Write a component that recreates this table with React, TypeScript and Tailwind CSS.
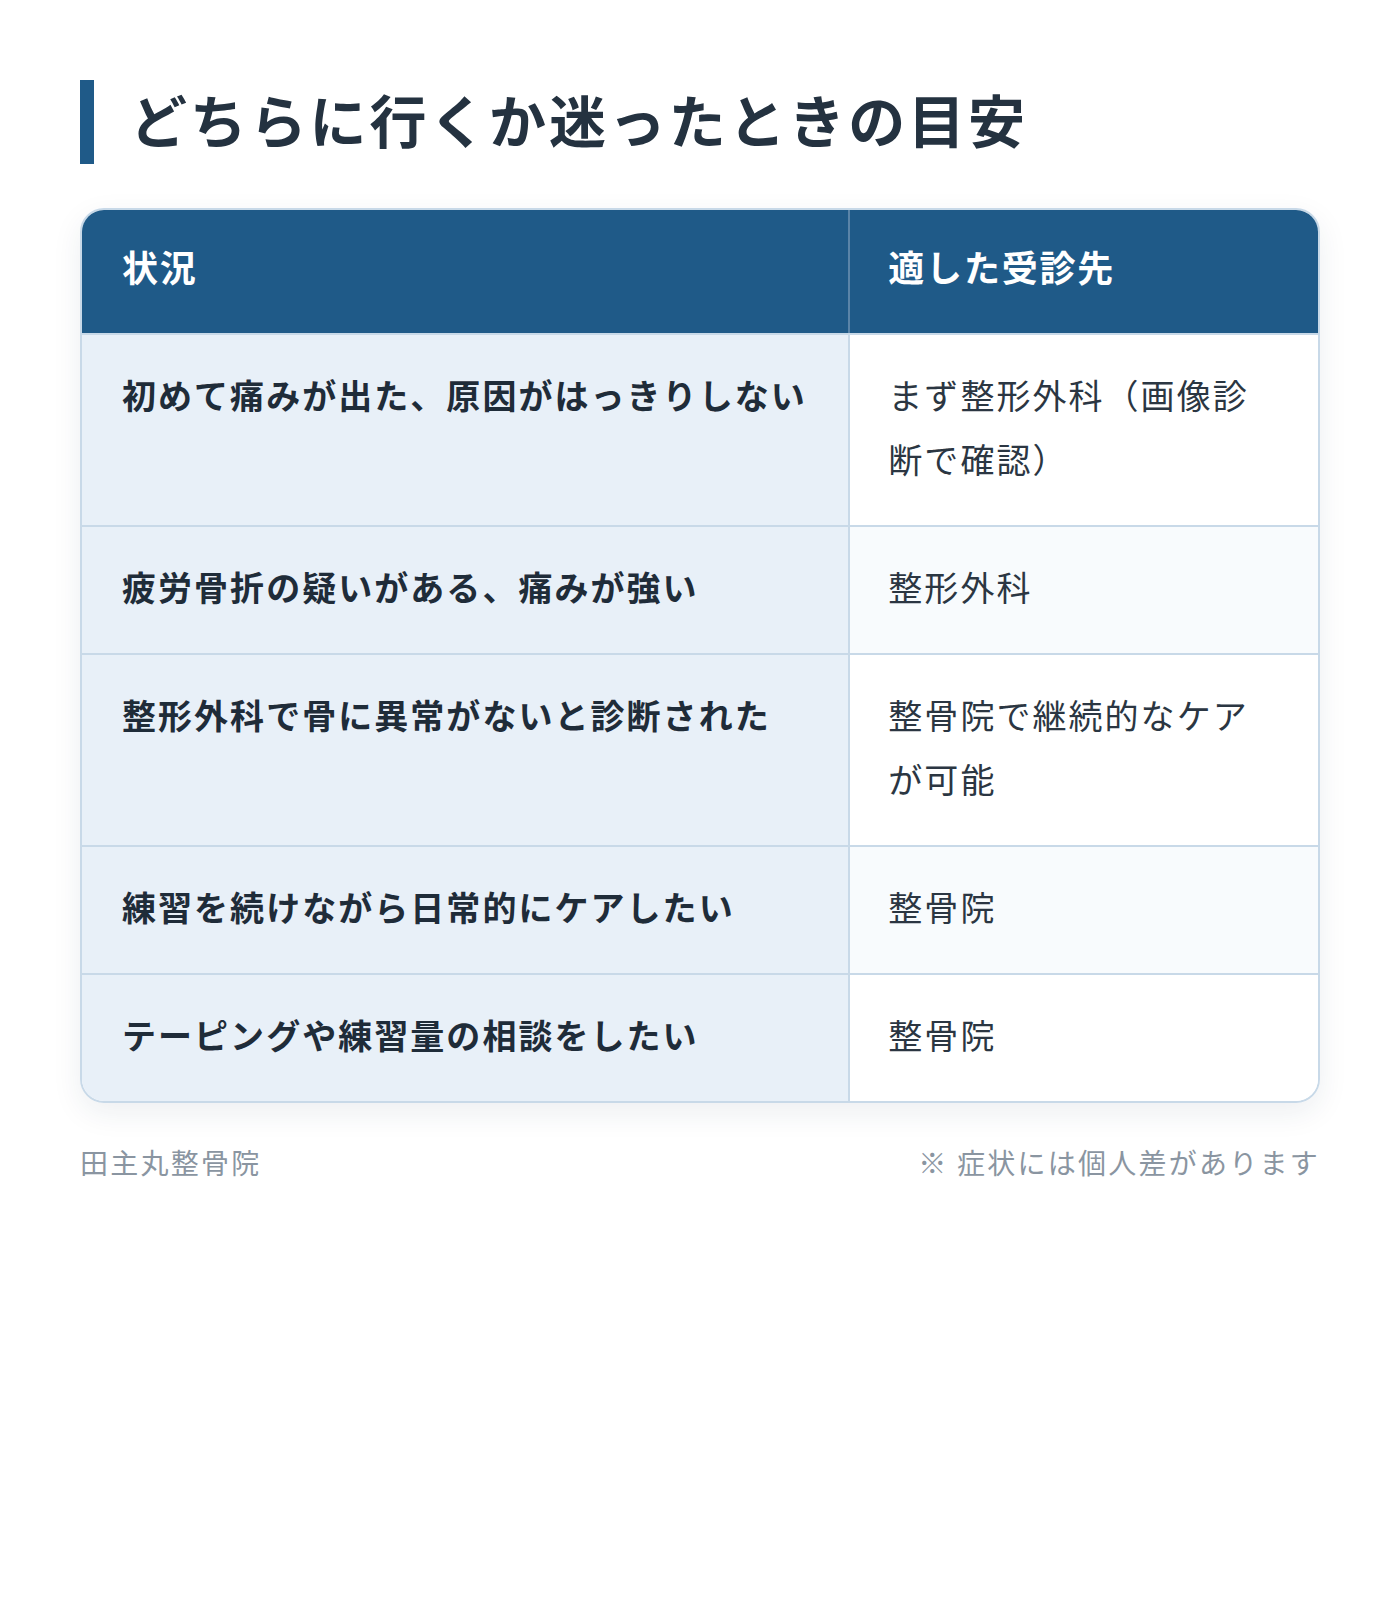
import React from "react";

interface Row {
    situation: string;
    place: string;
}

const rows: Row[] = [
    { situation: "初めて痛みが出た、原因がはっきりしない", place: "まず整形外科（画像診断で確認）" },
    { situation: "疲労骨折の疑いがある、痛みが強い", place: "整形外科" },
    { situation: "整形外科で骨に異常がないと診断された", place: "整骨院で継続的なケアが可能" },
    { situation: "練習を続けながら日常的にケアしたい", place: "整骨院" },
    { situation: "テーピングや練習量の相談をしたい", place: "整骨院" },
];

const font = { fontFamily: '"Noto Sans CJK JP", "Noto Sans", sans-serif' };

export default function App() {
    return (
        <div className="w-[1400px] min-h-[1600px] bg-white px-20 pt-20" style={font}>
            {/* Title */}
            <h1 className="border-l-[14px] border-[#1f5a88] pl-9 pb-2 text-[57px] leading-[76px] font-bold tracking-[0.05em] text-[#243240]">
                どちらに行くか迷ったときの目安
            </h1>

            {/* Table */}
            <div className="mt-11 overflow-hidden rounded-3xl border-2 border-[#c8d9e8] shadow-[0_10px_30px_rgba(20,50,80,0.08)]">
                <div className="grid grid-cols-[62%_38%] bg-[#1f5a88] text-white">
                    <div className="px-10 pt-[35px] pb-[45px] text-[36px] leading-[43px] font-bold tracking-[0.05em]">状況</div>
                    <div className="border-l-2 border-[#5a84a8] pl-[38px] pr-10 pt-[35px] pb-[45px] text-[36px] leading-[43px] font-bold tracking-[0.05em]">
                        適した受診先
                    </div>
                </div>
                {rows.map((row, i) => (
                    <div key={i} className="grid grid-cols-[62%_38%] border-t-2 border-[#c8d9e8]">
                        <div className="bg-[#e8f0f8] px-10 pt-[28px] pb-[34px] text-[34px] leading-[64px] font-bold tracking-[0.06em] text-[#1f2c39]">
                            {row.situation}
                        </div>
                        <div
                            className={`border-l-2 border-[#c8d9e8] pl-[38px] pr-12 pt-[28px] pb-[34px] text-[34px] leading-[64px] tracking-[0.06em] text-[#2b3642] ${
                                i % 2 === 1 ? "bg-[#f8fbfd]" : "bg-white"
                            }`}
                        >
                            {row.place}
                        </div>
                    </div>
                ))}
            </div>

            {/* Footer */}
            <div className="mt-[38px] flex items-center justify-between text-[28px] leading-[42px] tracking-[0.08em] text-[#8a95a1]">
                <span>田主丸整骨院</span>
                <span>※ 症状には個人差があります</span>
            </div>
        </div>
    );
}
